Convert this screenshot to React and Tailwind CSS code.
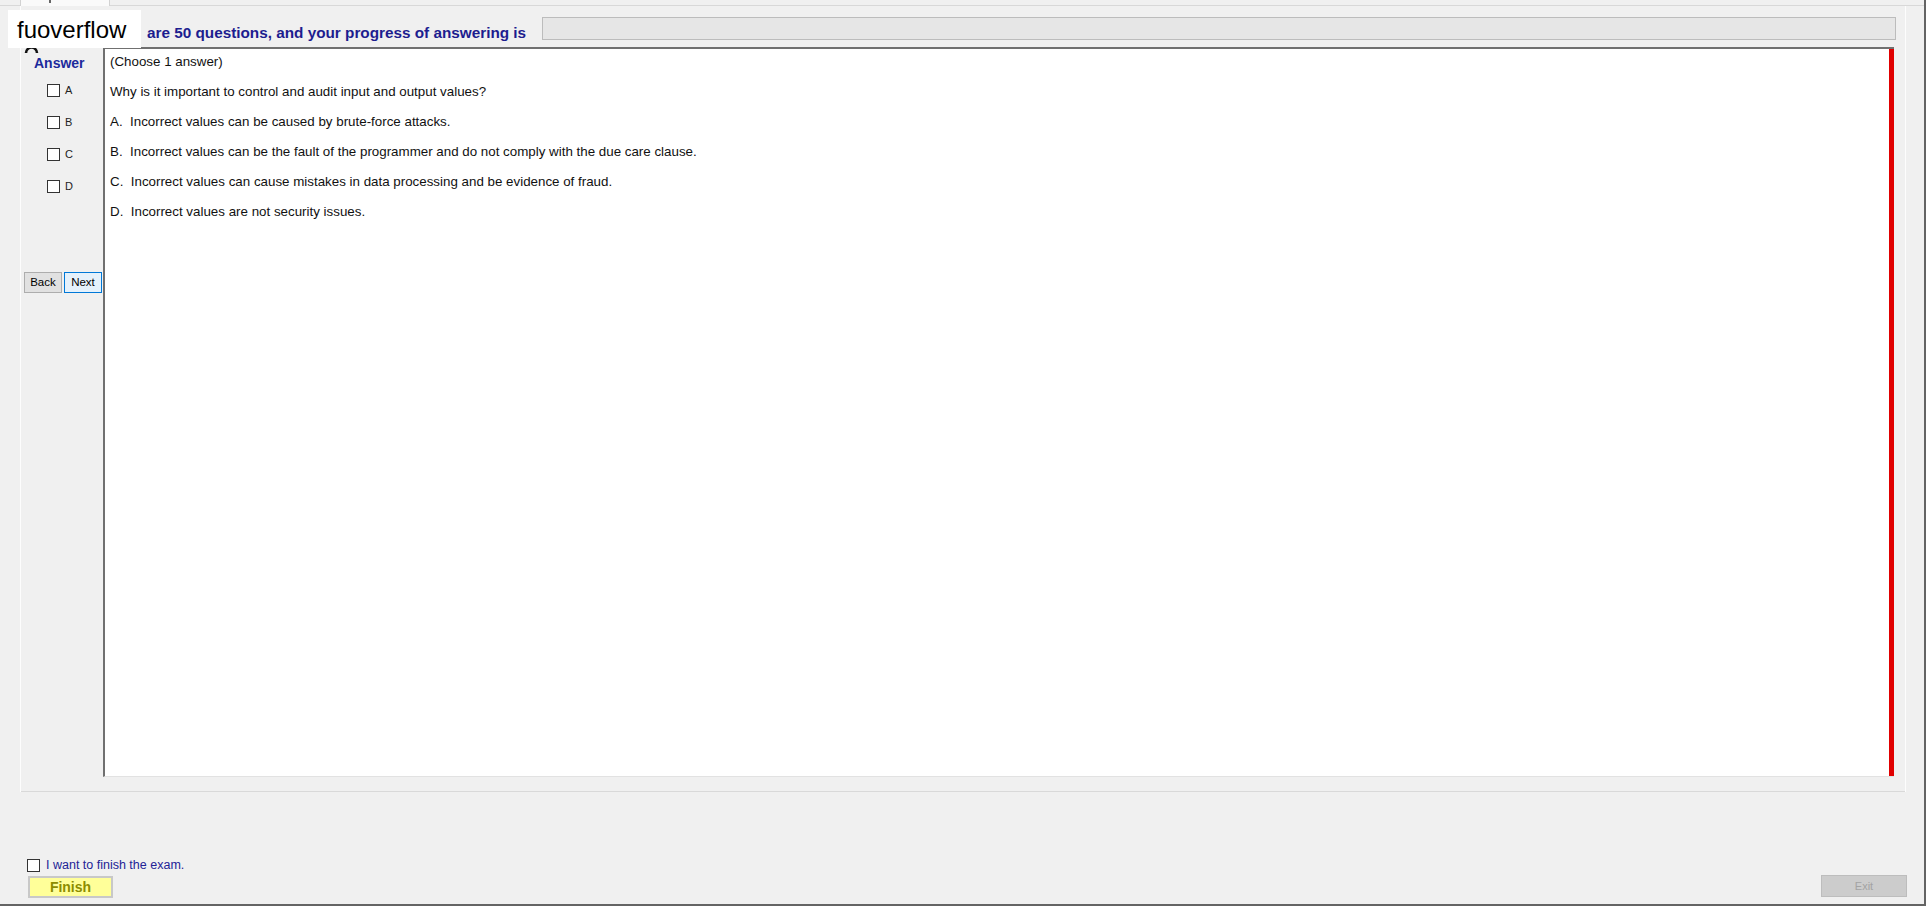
import React from "react";

const options = [
  "A.  Incorrect values can be caused by brute-force attacks.",
  "B.  Incorrect values can be the fault of the programmer and do not comply with the due care clause.",
  "C.  Incorrect values can cause mistakes in data processing and be evidence of fraud.",
  "D.  Incorrect values are not security issues.",
];

function Box({ label }) {
  return (
    <div className="h-[32px] flex items-center pl-[26px]">
      <div className="w-[13px] h-[13px] bg-white border border-[#333333]" />
      <span className="ml-[5px] text-[11px] text-[#222222] leading-none">{label}</span>
    </div>
  );
}

export default function App() {
  return (
    <div
      className="relative w-[1926px] h-[906px] bg-[#f0f0f0] flex flex-col overflow-hidden border-r-2 border-b-2 border-[#646464]"
      style={{ fontFamily: '"Liberation Sans", Arial, sans-serif' }}
    >
      {/* top tab strip */}
      <div className="h-[6px] flex shrink-0">
        <div className="w-[20px] border-b border-[#d8d8d8]" />
        <div className="w-[90px] h-[6px] bg-[#fafafa] border-x border-[#d2d2d2] relative">
          <div className="absolute left-[28px] top-0 w-[2px] h-[3px] bg-[#666666]" />
        </div>
        <div className="flex-1 border-b border-[#d8d8d8]" />
      </div>

      {/* tab page */}
      <div className="ml-[20px] w-[1886px] flex flex-col border-l border-r border-[#fdfdfd] shrink-0">
        {/* header row */}
        <div className="h-[41px] flex items-start">
          <div className="w-[126px]" />
          <span className="mt-[18px] leading-[18px] text-[15.3px] font-bold text-[#1d1d8f] whitespace-nowrap">
            are 50 questions, and your progress of answering is
          </span>
          <div className="ml-[16px] mt-[11px] w-[1354px] h-[23px] bg-[#e6e6e6] border border-[#bcbcbc]" />
        </div>

        {/* main group */}
        <div className="h-[745px] flex border-b border-[#d9d9d9]">
          {/* left answer column */}
          <div className="w-[82px] flex flex-col">
            <div className="pt-[9px] pl-[13px] leading-[14px] text-[14px] font-bold text-[#1c2a9c]">Answer</div>
            <div className="mt-[4px]">
              <Box label="A" />
              <Box label="B" />
              <Box label="C" />
              <Box label="D" />
            </div>
            <div className="mt-[70px] pl-[3px] flex gap-[2px]">
              <button className="w-[38px] h-[21px] bg-[#e1e1e1] border border-[#adadad] text-[11.5px] text-black leading-none">
                Back
              </button>
              <button className="w-[38px] h-[21px] bg-[#e5f1fb] border border-[#0078d7] text-[11.5px] text-black leading-none">
                Next
              </button>
            </div>
          </div>

          {/* content */}
          <div className="w-[1791px] h-[730px] flex bg-white border-t-2 border-l-2 border-[#707070] border-b border-b-[#e2e2e2]">
            <div className="flex-1 pl-[5px] flex flex-col gap-[4px] text-[13.35px] text-[#111111]">
              <div className="leading-[26px]">(Choose 1 answer)</div>
              <div className="leading-[26px]">Why is it important to control and audit input and output values?</div>
              {options.map((o) => (
                <div key={o} className="leading-[26px] whitespace-pre">
                  {o}
                </div>
              ))}
            </div>
            <div className="w-[5px] bg-[#e00000]" />
          </div>
        </div>
      </div>

      <div className="flex-1" />

      {/* bottom area */}
      <div className="flex items-end justify-between pl-[27px] pr-[17px] pb-[6px]">
        <div className="flex flex-col">
          <div className="h-[16px] flex items-center">
            <div className="w-[13px] h-[13px] bg-white border border-[#333333]" />
            <span className="ml-[6px] text-[12.5px] text-[#232396] leading-none">I want to finish the exam.</span>
          </div>
          <button className="mt-[3px] ml-[1px] w-[85px] h-[22px] bg-[#ffff99] border-2 border-[#c8c8c8] text-[14px] font-bold text-[#8c8c00] leading-none">
            Finish
          </button>
        </div>
        <button className="mb-[1px] w-[86px] h-[22px] bg-[#cccccc] border border-[#bdbdbd] text-[11px] text-[#a3a3a3] leading-none">
          Exit
        </button>
      </div>

      {/* overlays */}
      <svg className="absolute left-[24px] top-[45px]" width="15" height="9" viewBox="0 0 15 9">
        <path d="M2 8 A5.5 5.5 0 0 1 13 8" fill="none" stroke="#111111" strokeWidth="2.6" />
      </svg>
      <div className="absolute left-[8px] top-[10px] w-[133px] h-[38px] bg-white pl-[9px] pt-[2px] leading-[36px] text-[24px] text-black">
        fuoverflow
      </div>
    </div>
  );
}
